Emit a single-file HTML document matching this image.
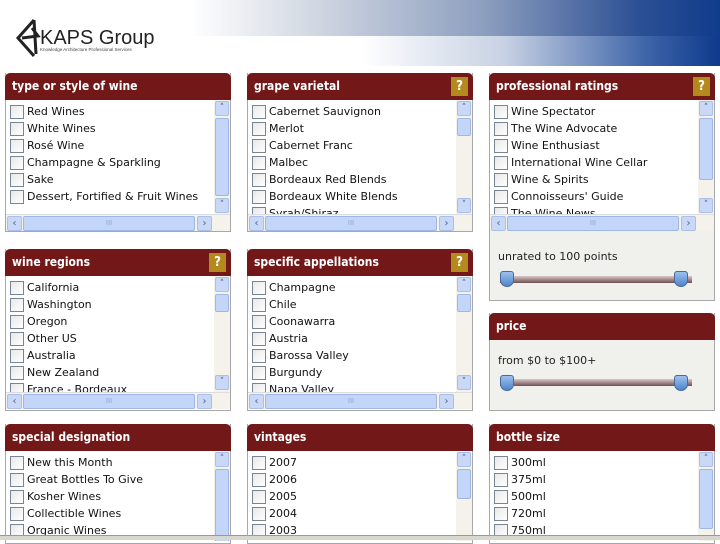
<!DOCTYPE html>
<html><head><meta charset="utf-8"><style>
*{margin:0;padding:0;box-sizing:border-box}
body{width:720px;height:540px;overflow:hidden;background:#fff;position:relative;font-family:"DejaVu Sans","Liberation Sans",sans-serif}
.band1{position:absolute;left:190px;top:0;width:530px;height:36px;background:linear-gradient(90deg,#fff 0%,#d8dde6 20%,#8ea0c0 55%,#2b4f94 85%,#103c8c 100%)}
.band2{position:absolute;left:360px;top:36px;width:360px;height:30px;background:linear-gradient(90deg,#fff 0%,#c8d2e4 40%,#3d63a8 80%,#0d3a8c 100%)}
.p{position:absolute;width:226px;background:#fff;border:1px solid #a8a8a8;border-top:none}
.hd{height:27px;background:#731818;border-radius:5px 5px 0 0;color:#fff;font-weight:bold;font-size:12px;line-height:27px;padding-left:7px;position:relative;margin:0 -1px;font-family:"DejaVu Sans Condensed","DejaVu Sans",sans-serif}
.q{position:absolute;right:5px;top:4px;width:17px;height:19px;background:#b48a1c;color:#fff;font-size:13px;line-height:19px;text-align:center}
.list{position:relative;overflow:hidden}
.it{height:17px;font-size:11px;line-height:17px;color:#111;padding-left:21px;position:relative;white-space:nowrap}
.it:before{content:"";position:absolute;left:4px;top:2px;width:12px;height:12px;border:1px solid #7a8594;background:linear-gradient(135deg,#e8e8e8,#fff)}
.vs{position:absolute;right:0;top:0;width:16px;background:#f4f2ea}
.vs .b{position:absolute;left:1px;width:14px;height:15px;background:#c8d8f6;border:1px solid #aac0ea;border-radius:2px;font-size:9px;color:#4d6185;text-align:center;line-height:13px}
.vs .th{position:absolute;left:1px;width:14px;background:#c3d5f9;border:1px solid #9fb7e6;border-radius:2px}
.hs{height:17px;background:#f4f2ea;position:relative;border-top:1px solid #ddd}
.hs .b{position:absolute;top:1px;width:15px;height:15px;background:#c8d8f6;border:1px solid #aac0ea;border-radius:2px;font-size:10px;color:#4d6185;text-align:center;line-height:13px}
.hs .th{position:absolute;top:1px;left:17px;right:35px;height:15px;background:#c3d5f9;border:1px solid #9fb7e6;border-radius:2px;font-size:7px;color:#8fa5cc;text-align:center;line-height:13px}
.gr{background:#f0f0ec}
.sl{position:absolute;left:10px;width:192px;height:7px;background:linear-gradient(#dcc8c8,#6d5050);}
.kn{position:absolute;width:14px;height:16px;background:linear-gradient(#9cc0ec,#4f86cc);border:1px solid #4a6a9a;border-radius:3px 3px 7px 7px}
.lbl{position:absolute;left:8px;font-size:11px;color:#222}
</style></head><body>
<div class="band1"></div><div class="band2"></div>
<svg style="position:absolute;left:14px;top:18px" width="150" height="42">
<path d="M20 2 L4 20 L20 38 M20 2 L22 36 M8 20 L24 18 L18 10" stroke="#222" stroke-width="3" fill="none"/>
<text x="26" y="26" font-family="Liberation Sans" font-size="20" fill="#222">KAPS Group</text>
<text x="26" y="33" font-family="Liberation Sans" font-size="4.5" fill="#444">Knowledge Architecture Professional Services</text>
</svg>

<!-- row 1 -->
<div class="p" style="left:5px;top:73px;height:159px">
<div class="hd">type or style of wine</div>
<div class="list" style="height:114px;padding-top:3px">
<div class="it">Red Wines</div><div class="it">White Wines</div><div class="it">Rosé Wine</div><div class="it">Champagne &amp; Sparkling</div><div class="it">Sake</div><div class="it">Dessert, Fortified &amp; Fruit Wines</div>
<div class="vs" style="height:114px"><div class="b" style="top:1px">˄</div><div class="th" style="top:18px;height:78px"></div><div class="b" style="top:98px">˅</div></div>
</div>
<div class="hs"><div class="b" style="left:1px">‹</div><div class="th">III</div><div class="b" style="right:18px">›</div></div>
</div>

<div class="p" style="left:247px;top:73px;height:159px">
<div class="hd">grape varietal<div class="q">?</div></div>
<div class="list" style="height:114px;padding-top:3px">
<div class="it">Cabernet Sauvignon</div><div class="it">Merlot</div><div class="it">Cabernet Franc</div><div class="it">Malbec</div><div class="it">Bordeaux Red Blends</div><div class="it">Bordeaux White Blends</div><div class="it">Syrah/Shiraz</div>
<div class="vs" style="height:114px"><div class="b" style="top:1px">˄</div><div class="th" style="top:18px;height:18px"></div><div class="b" style="top:98px">˅</div></div>
</div>
<div class="hs"><div class="b" style="left:1px">‹</div><div class="th">III</div><div class="b" style="right:18px">›</div></div>
</div>

<div class="p gr" style="left:489px;top:73px;height:228px">
<div class="hd">professional ratings<div class="q">?</div></div>
<div class="list" style="height:114px;padding-top:3px;background:#fff">
<div class="it">Wine Spectator</div><div class="it">The Wine Advocate</div><div class="it">Wine Enthusiast</div><div class="it">International Wine Cellar</div><div class="it">Wine &amp; Spirits</div><div class="it">Connoisseurs' Guide</div><div class="it">The Wine News</div>
<div class="vs" style="height:114px"><div class="b" style="top:1px">˄</div><div class="th" style="top:18px;height:62px"></div><div class="b" style="top:98px">˅</div></div>
</div>
<div class="hs"><div class="b" style="left:1px">‹</div><div class="th">III</div><div class="b" style="right:18px">›</div></div>
<div class="lbl" style="top:177px">unrated to 100 points</div>
<div class="sl" style="top:203px"></div><div class="kn" style="left:10px;top:198px"></div><div class="kn" style="left:184px;top:198px"></div>
</div>

<!-- row 2 -->
<div class="p" style="left:5px;top:249px;height:162px">
<div class="hd">wine regions<div class="q">?</div></div>
<div class="list" style="height:116px;padding-top:3px">
<div class="it">California</div><div class="it">Washington</div><div class="it">Oregon</div><div class="it">Other US</div><div class="it">Australia</div><div class="it">New Zealand</div><div class="it">France - Bordeaux</div>
<div class="vs" style="height:116px"><div class="b" style="top:1px">˄</div><div class="th" style="top:18px;height:18px"></div><div class="b" style="top:99px">˅</div></div>
</div>
<div class="hs"><div class="b" style="left:1px">‹</div><div class="th">III</div><div class="b" style="right:18px">›</div></div>
</div>

<div class="p" style="left:247px;top:249px;height:162px">
<div class="hd">specific appellations<div class="q">?</div></div>
<div class="list" style="height:116px;padding-top:3px">
<div class="it">Champagne</div><div class="it">Chile</div><div class="it">Coonawarra</div><div class="it">Austria</div><div class="it">Barossa Valley</div><div class="it">Burgundy</div><div class="it">Napa Valley</div>
<div class="vs" style="height:116px"><div class="b" style="top:1px">˄</div><div class="th" style="top:18px;height:18px"></div><div class="b" style="top:99px">˅</div></div>
</div>
<div class="hs"><div class="b" style="left:1px">‹</div><div class="th">III</div><div class="b" style="right:18px">›</div></div>
</div>

<div class="p gr" style="left:489px;top:313px;height:98px">
<div class="hd">price</div>
<div class="lbl" style="top:41px">from $0 to $100+</div>
<div class="sl" style="top:66px"></div><div class="kn" style="left:10px;top:62px"></div><div class="kn" style="left:184px;top:62px"></div>
</div>

<!-- row 3 -->
<div class="p" style="left:5px;top:424px;height:120px">
<div class="hd">special designation</div>
<div class="list" style="height:90px;padding-top:3px">
<div class="it">New this Month</div><div class="it">Great Bottles To Give</div><div class="it">Kosher Wines</div><div class="it">Collectible Wines</div><div class="it">Organic Wines</div>
<div class="vs" style="height:90px"><div class="b" style="top:1px">˄</div><div class="th" style="top:18px;height:80px"></div></div>
</div>
</div>

<div class="p" style="left:247px;top:424px;height:120px">
<div class="hd">vintages</div>
<div class="list" style="height:90px;padding-top:3px">
<div class="it">2007</div><div class="it">2006</div><div class="it">2005</div><div class="it">2004</div><div class="it">2003</div>
<div class="vs" style="height:90px"><div class="b" style="top:1px">˄</div><div class="th" style="top:18px;height:30px"></div></div>
</div>
</div>

<div class="p" style="left:489px;top:424px;height:120px">
<div class="hd">bottle size</div>
<div class="list" style="height:90px;padding-top:3px">
<div class="it">300ml</div><div class="it">375ml</div><div class="it">500ml</div><div class="it">720ml</div><div class="it">750ml</div>
<div class="vs" style="height:90px"><div class="b" style="top:1px">˄</div><div class="th" style="top:18px;height:60px"></div></div>
</div>
</div>

<div style="position:absolute;left:0;top:535px;width:720px;height:5px;background:#d8d8d0;border-top:1px solid #999"></div>
</body></html>
